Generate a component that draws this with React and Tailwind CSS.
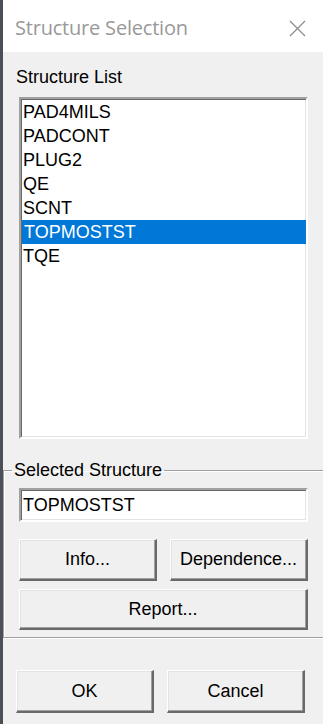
import React from 'react';

const items = ['PAD4MILS', 'PADCONT', 'PLUG2', 'QE', 'SCNT', 'TOPMOSTST', 'TQE'];

function Btn({ className = '', children }) {
  return (
    <button
      className={`flex items-center justify-center bg-[#f0f0f0] text-black text-[18px] border-t border-l border-t-white border-l-white border-r-2 border-b-2 border-r-[#696969] border-b-[#696969] shadow-[inset_-1px_-1px_0_#a0a0a0,inset_1px_1px_0_#e3e3e3] ${className}`}
    >
      {children}
    </button>
  );
}

export default function App() {
  const selected = 'TOPMOSTST';

  return (
    <div className="flex w-[323px] h-[724px] overflow-hidden font-['Liberation_Sans',Arial,sans-serif]">
      <div className="w-[3px] shrink-0 bg-[#4b5057]" />
      <div className="flex-1 flex flex-col">
        {/* Title bar */}
        <div className="h-[52px] bg-white flex items-center justify-between pl-[12px] pr-[19px] pt-[4px]">
          <span className="text-[20px] text-[#999999] font-['Open_Sans','Noto_Sans',sans-serif] tracking-[-0.2px]">
            Structure Selection
          </span>
          <svg width="17" height="17" viewBox="0 0 17 17">
            <path d="M1 1 L16 16 M16 1 L1 16" stroke="#8a8a8a" strokeWidth="1.2" fill="none" />
          </svg>
        </div>

        {/* Body */}
        <div className="flex-1 bg-[#f0f0f0] flex flex-col">
          <div className="pl-[13px] pt-[15px] text-[18px] leading-[21px] text-black">Structure List</div>

          <div className="ml-[16px] mt-[9px] w-[289px] h-[342px] bg-white border-2 border-t-[#a0a0a0] border-l-[#a0a0a0] border-b-white border-r-white shadow-[inset_1px_1px_0_#696969,inset_-1px_-1px_0_#e3e3e3] pt-[1px]">
            {items.map((it) => (
              <div
                key={it}
                className={`h-[24px] leading-[24px] pl-[2px] text-[18px] ${
                  it === selected ? 'bg-[#0078d7] text-white ml-[1px] pl-[1px]' : 'text-black'
                }`}
              >
                {it}
              </div>
            ))}
          </div>

          {/* Selected structure group */}
          <fieldset className="mt-[21px] mr-[1px] h-[178px] border border-[#a0a0a0] shadow-[inset_1px_1px_0_#fff,1px_1px_0_#fff] px-[15px] pb-0">
            <legend className="ml-[-7px] px-[2px] text-[18px] leading-[20px] text-black">Selected Structure</legend>
            <div className="mt-[8px] w-[289px] h-[34px] bg-white border-2 border-t-[#a0a0a0] border-l-[#a0a0a0] border-b-white border-r-white shadow-[inset_1px_1px_0_#696969,inset_-1px_-1px_0_#e3e3e3] pl-[2px] text-[18px] leading-[30px] text-black">
              TOPMOSTST
            </div>
            <div className="mt-[17px] flex gap-[13px]">
              <Btn className="w-[138px] h-[42px]">Info...</Btn>
              <Btn className="w-[138px] h-[42px]">Dependence...</Btn>
            </div>
            <Btn className="mt-[8px] w-[289px] h-[41px]">Report...</Btn>
          </fieldset>

          <div className="mt-[32px] ml-[13px] flex gap-[13px]">
            <Btn className="w-[138px] h-[43px]">OK</Btn>
            <Btn className="w-[138px] h-[43px]">Cancel</Btn>
          </div>
        </div>
      </div>
    </div>
  );
}
